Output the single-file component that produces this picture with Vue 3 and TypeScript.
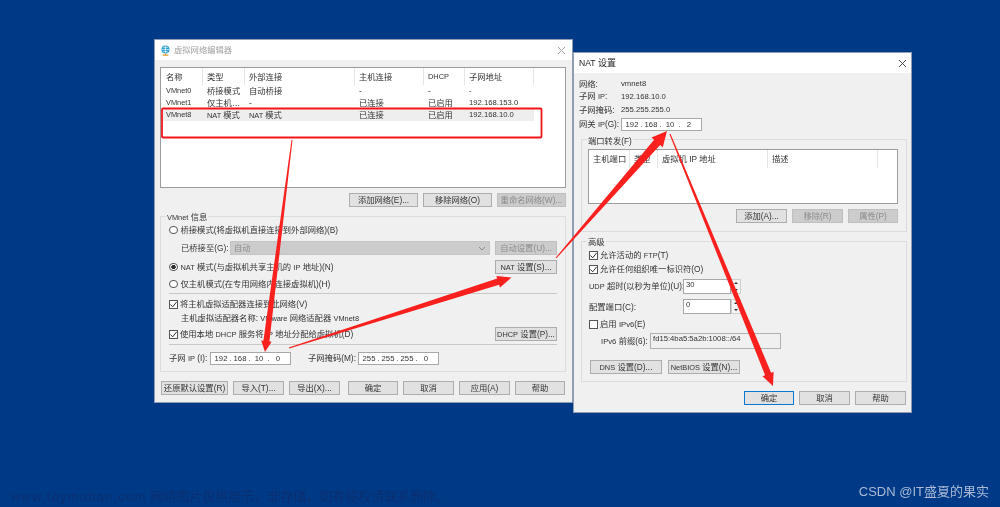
<script setup lang="ts">
interface Arrow { x1: number; y1: number; x2: number; y2: number; tail: number; neck: number; headW: number; headL: number }

const networks = [
  { name: 'VMnet0', type: '桥接模式', ext: '自动桥接', host: '-', dhcp: '-', subnet: '-', on: false, nat: false },
  { name: 'VMnet1', type: '仅主机…', ext: '-', host: '已连接', dhcp: '已启用', subnet: '192.168.153.0', on: false, nat: false },
  { name: 'VMnet8', type: '模式', ext: '模式', host: '已连接', dhcp: '已启用', subnet: '192.168.10.0', on: true, nat: true },
]
const leftHead = ['名称', '类型', '外部连接', '主机连接', 'DHCP', '子网地址']
const natHead = ['主机端口', '类型', '虚拟机 IP 地址', '描述']
const subnetIp = ['192', '168', '10', '0']
const maskIp = ['255', '255', '255', '0']
const gatewayIp = ['192', '168', '10', '2']

const arrows: Arrow[] = [
  { x1: 292, y1: 140, x2: 265, y2: 352, tail: 1, neck: 6, headW: 10.5, headL: 11 },
  { x1: 289, y1: 348, x2: 511.500, y2: 277.500, tail: 1, neck: 6.5, headW: 12, headL: 14 },
  { x1: 556, y1: 258, x2: 667, y2: 131, tail: 1, neck: 8, headW: 15, headL: 15 },
  { x1: 670, y1: 134, x2: 773, y2: 386, tail: 1, neck: 6.5, headW: 12, headL: 13 },
]

function points(a: Arrow): string {
  const dx = a.x2 - a.x1
  const dy = a.y2 - a.y1
  const len = Math.hypot(dx, dy)
  const ux = dx / len
  const uy = dy / len
  const nx = -uy
  const ny = ux
  const bx = a.x2 - ux * a.headL
  const by = a.y2 - uy * a.headL
  const at = (x: number, y: number, off: number) => `${(x + nx * off).toFixed(1)},${(y + ny * off).toFixed(1)}`
  return [
    at(a.x1, a.y1, a.tail / 2),
    at(bx, by, a.neck / 2),
    at(bx, by, a.headW / 2),
    at(a.x2, a.y2, 0),
    at(bx, by, -a.headW / 2),
    at(bx, by, -a.neck / 2),
    at(a.x1, a.y1, -a.tail / 2),
  ].join(' ')
}
</script>

<template>
  <div class="desktop">
    <section class="win win-left">
      <header class="title inactive">
        <svg class="globe" viewBox="0 0 12 12" width="11" height="11">
          <circle cx="6" cy="5" r="4.4" fill="#2a9fd0" />
          <path d="M2 5h8M6 .8v8.4M3.2 2.2c1.8 1 3.8 1 5.6 0M3.2 7.800c1.800-1 3.800-1 5.600 0" stroke="#fff" stroke-width=".7" fill="none" />
          <path d="M3 11h6M6 9.400V11" stroke="#e09a30" stroke-width="1.200" />
        </svg>
        <span>虚拟网络编辑器</span>
        <svg class="close" viewBox="0 0 9 9" width="9" height="9"><path d="M1 1l7 7M8 1L1 8" stroke="#9a9a9a" stroke-width=".9" /></svg>
      </header>
      <div class="body-left">
        <div class="list list-left">
          <div class="lrow lhead">
            <span v-for="h in leftHead" :key="h" class="hcell" :class="{ small: h === 'DHCP' }">{{ h }}</span>
          </div>
          <div v-for="n in networks" :key="n.name" class="lrow ldata" :class="{ sel: n.on }">
            <span class="small">{{ n.name }}</span>
            <span><span v-if="n.nat" class="small">NAT </span>{{ n.type }}</span>
            <span><span v-if="n.nat" class="small">NAT </span>{{ n.ext }}</span>
            <span>{{ n.host }}</span>
            <span>{{ n.dhcp }}</span>
            <span class="lat">{{ n.subnet }}</span>
          </div>
        </div>
        <div class="btns btns-list">
          <button class="w69">添加网络(E)...</button>
          <button class="w69">移除网络(O)</button>
          <button class="w69 off">重命名网络(W)...</button>
        </div>
        <div class="group group-vm">
          <span class="legend"><span class="small">VMnet</span> 信息</span>
          <div class="row">
            <i class="radio"></i><span>桥接模式(将虚拟机直接连接到外部网络)(B)</span>
          </div>
          <div class="row mt4 indent">
            <span class="bridge-label">已桥接至(G):</span>
            <div class="select"><span>自动</span>
              <svg viewBox="0 0 8 5" width="8" height="5"><path d="M1 1l3 3 3-3" stroke="#8c8c8c" fill="none" /></svg>
            </div>
            <button class="w62 off">自动设置(U)...</button>
          </div>
          <div class="row mt5 split">
            <div class="row"><i class="radio on"></i><span><span class="small">NAT</span> 模式(与虚拟机共享主机的 <span class="small">IP</span> 地址)(N)</span></div>
            <button class="w62"><span class="small">NAT</span> 设置(S)...</button>
          </div>
          <div class="row mt3">
            <i class="radio"></i><span>仅主机模式(在专用网络内连接虚拟机)(H)</span>
          </div>
          <div class="sep sep-a"></div>
          <div class="row">
            <i class="check">
              <svg viewBox="0 0 9 9" width="9" height="9"><path d="M1.500 4.500l2.200 2.300 4-5" stroke="#333" fill="none" /></svg>
            </i><span>将主机虚拟适配器连接到此网络(V)</span>
          </div>
          <div class="row indent"><span>主机虚拟适配器名称: <span class="small">VMware</span> 网络适配器 <span class="small">VMnet8</span></span></div>
          <div class="row mt2 split">
            <div class="row">
              <i class="check">
                <svg viewBox="0 0 9 9" width="9" height="9"><path d="M1.500 4.500l2.200 2.300 4-5" stroke="#333" fill="none" /></svg>
              </i><span>使用本地 <span class="small">DHCP</span> 服务将 <span class="small">IP</span> 地址分配给虚拟机(D)</span>
            </div>
            <button class="w62"><span class="small">DHCP</span> 设置(P)...</button>
          </div>
          <div class="sep sep-b"></div>
          <div class="row">
            <span class="subnet-label">子网 <span class="small">IP</span> (I):</span>
            <div class="ip">
              <template v-for="(o, i) in subnetIp" :key="i"><span class="octet">{{ o }}</span><span v-if="i < 3" class="dot">.</span></template>
            </div>
            <span class="mask-label">子网掩码(M):</span>
            <div class="ip">
              <template v-for="(o, i) in maskIp" :key="i"><span class="octet">{{ o }}</span><span v-if="i < 3" class="dot">.</span></template>
            </div>
          </div>
        </div>
        <div class="btns btns-foot">
          <button class="w67">还原默认设置(R)</button>
          <button class="w51">导入(T)...</button>
          <button class="w51">导出(X)...</button>
          <button class="w50 gap3">确定</button>
          <button class="w51">取消</button>
          <button class="w51">应用(A)</button>
          <button class="w50">帮助</button>
        </div>
      </div>
    </section>

    <section class="win win-right">
      <header class="title title-right">
        <span><span class="title-lat">NAT</span> 设置</span>
        <svg class="close" viewBox="0 0 9 9" width="9" height="9"><path d="M1 1l7 7M8 1L1 8" stroke="#333" stroke-width=".9" /></svg>
      </header>
      <div class="body-right">
        <dl class="info">
          <dt>网络:</dt><dd class="lat">vmnet8</dd>
          <dt>子网 <span class="small">IP</span>:</dt><dd class="lat">192.168.10.0</dd>
          <dt>子网掩码:</dt><dd class="lat">255.255.255.0</dd>
        </dl>
        <div class="row gateway">
          <span class="gw-label">网关 <span class="small">IP</span>(G):</span>
          <div class="ip">
            <template v-for="(o, i) in gatewayIp" :key="i"><span class="octet">{{ o }}</span><span v-if="i < 3" class="dot">.</span></template>
          </div>
        </div>
        <div class="group group-port">
          <span class="legend legend-port">端口转发(F)</span>
          <div class="list list-nat">
            <div class="nrow">
              <span v-for="h in natHead" :key="h" class="hcell">{{ h }}</span>
            </div>
          </div>
          <div class="btns btns-port">
            <button class="w51">添加(A)...</button>
            <button class="w51 off">移除(R)</button>
            <button class="w50 off">属性(P)</button>
          </div>
        </div>
        <div class="group group-adv">
          <span class="legend">高级</span>
          <div class="row">
            <i class="check">
              <svg viewBox="0 0 9 9" width="9" height="9"><path d="M1.500 4.500l2.200 2.300 4-5" stroke="#333" fill="none" /></svg>
            </i><span>允许活动的 <span class="small">FTP</span>(T)</span>
          </div>
          <div class="row">
            <i class="check">
              <svg viewBox="0 0 9 9" width="9" height="9"><path d="M1.500 4.500l2.200 2.300 4-5" stroke="#333" fill="none" /></svg>
            </i><span>允许任何组织唯一标识符(O)</span>
          </div>
          <div class="row spin-row mt-udp">
            <span class="spin-label"><span class="small">UDP</span> 超时(以秒为单位)(U):</span>
            <div class="spin-val">30</div>
            <div class="spin"><i class="up"></i><i class="down"></i></div>
          </div>
          <div class="row spin-row mt-cfg">
            <span class="spin-label">配置端口(C):</span>
            <div class="spin-val">0</div>
            <div class="spin"><i class="up"></i><i class="down"></i></div>
          </div>
          <div class="row mt-v6"><i class="check"></i><span>启用 <span class="lat">IPv6</span>(E)</span></div>
          <div class="row mt-prefix">
            <span class="prefix-label"><span class="lat">IPv6</span> 前缀(6):</span>
            <div class="prefix lat">fd15:4ba5:5a2b:1008::/64</div>
          </div>
          <div class="btns btns-dns">
            <button class="w72"><span class="small">DNS</span> 设置(D)...</button>
            <button class="w72"><span class="small">NetBIOS</span> 设置(N)...</button>
          </div>
        </div>
        <div class="btns btns-ok">
          <button class="w50 primary">确定</button>
          <button class="w51">取消</button>
          <button class="w51">帮助</button>
        </div>
      </div>
    </section>

    <svg class="overlay" viewBox="0 0 1000 507" width="1000" height="507">
      <rect x="162" y="108.500" width="379.500" height="29" rx="1" fill="none" stroke="#f5141c" stroke-width="1.800" />
      <polygon v-for="(a, i) in arrows" :key="i" :points="points(a)" fill="#f9201e" />
    </svg>

    <footer class="marks">
      <span class="mark-a"><span class="mark-url">www.toymoban.com</span> 网络图片仅供展示，非存储，如有侵权请联系删除。</span>
      <span class="mark-b">CSDN @IT盛夏的果实</span>
    </footer>
  </div>
</template>

<style>
html, body { margin: 0; background: #003a87; }
</style>

<style scoped>
.desktop {
  position: relative;
  width: 1000px;
  height: 507px;
  overflow: hidden;
  background: #003a87;
  filter: blur(0.42px);
  font-family: "Liberation Sans", "Noto Sans CJK SC", sans-serif;
  font-size: 8.3px;
  line-height: 12px;
  color: #333;
}
.lat { font-size: 7.7px; }
.small { font-size: 7.4px; }
.win {
  position: absolute;
  display: flex;
  flex-direction: column;
  box-sizing: border-box;
  background: #f0f0f0;
  border: 1px solid #8f9cb5;
}
.win-left { left: 154px; top: 39px; width: 419px; height: 364px; }
.win-right { left: 573px; top: 52px; width: 339px; height: 361px; }
.title {
  display: flex;
  align-items: center;
  height: 20px;
  flex: none;
  background: #fff;
  padding: 0 6px 0 5px;
  color: #222;
  font-size: 8.3px;
}
.title-right { font-size: 9px; padding-right: 4px; }
.title-lat { font-size: 8.6px; }
.title .close { margin-left: auto; }
.inactive { color: #a2a2a2; }
.globe { margin-right: 3px; }
.body-left { padding: 7px 6px 0 5px; display: flex; flex-direction: column; }
.body-right { padding: 4px 5px 0 5px; display: flex; flex-direction: column; }

.list { box-sizing: border-box; background: #fff; border: 1px solid #9c9c9c; }
.list-left { height: 121px; width: 406px; }
.lrow { display: grid; grid-template-columns: 42px 42px 110px 69px 41px 69px; align-items: center; }
.lhead { height: 17px; }
.ldata { height: 12px; }
.ldata > span { padding-left: 4px; white-space: nowrap; overflow: hidden; }
.ldata > span:first-child { padding-left: 5px; }
.sel { background: #eeeeee; width: 373px; }
.hcell {
  box-sizing: border-box;
  height: 100%;
  padding-left: 4px;
  display: flex;
  align-items: center;
  border-right: 1px solid #e5e5e5;
  white-space: pre;
}
.lhead .hcell:first-child { padding-left: 5px; }
.btns { display: flex; }
button {
  box-sizing: border-box;
  height: 14px;
  padding: 0;
  font: inherit;
  line-height: 12px;
  color: #333;
  background: #e1e1e1;
  border: 1px solid #adadad;
  white-space: nowrap;
  overflow: hidden;
}
button.off { background: #cccccc; border-color: #bfbfbf; color: #8b8b8b; }
button.primary { border-color: #0a78d0; }
.w50 { width: 50px; }
.w51 { width: 51px; }
.w62 { width: 62px; }
.w67 { width: 67px; }
.w69 { width: 69px; }
.w72 { width: 72px; }
.btns-list { justify-content: flex-end; gap: 5px; margin-top: 5px; width: 406px; }
.btns-foot { gap: 5px; margin-top: 9px; margin-left: 1px; }
.gap3 { margin-left: 3px; }

.group { position: relative; box-sizing: border-box; border: 1px solid #dcdcdc; }
.legend { position: absolute; left: 5px; top: -6px; background: #f0f0f0; padding: 0 1px; }
.legend-port { top: -5px; }
.group-vm { width: 406px; height: 156px; margin-top: 9px; padding: 6px 8px 0 8px; display: flex; flex-direction: column; }
.row { display: flex; align-items: center; height: 14px; flex: none; white-space: nowrap; }
.split { justify-content: space-between; }
.indent { padding-left: 12px; }
.mt2 { margin-top: 2px; }
.mt3 { margin-top: 3px; }
.mt4 { margin-top: 4px; }
.mt5 { margin-top: 5px; }
.radio {
  box-sizing: border-box;
  width: 8.500px;
  height: 8.500px;
  margin-right: 3px;
  border: 1px solid #555;
  border-radius: 50%;
  background: #fff;
  display: block;
  flex: none;
}
.radio.on { background: radial-gradient(circle, #333 0 2px, #fff 2.4px); }
.check {
  box-sizing: border-box;
  width: 9px;
  height: 9px;
  margin-right: 2px;
  border: 1px solid #555;
  background: #fff;
  display: flex;
  flex: none;
}
.check svg { margin: -1px; }
.bridge-label { width: 49px; }
.select {
  box-sizing: border-box;
  width: 260px;
  height: 14px;
  margin-right: 5px;
  padding: 0 3px;
  display: flex;
  align-items: center;
  justify-content: space-between;
  background: #cccccc;
  border: 1px solid #c4c4c4;
  color: #8b8b8b;
}
.sep { height: 1px; background: #c8c8c8; flex: none; }
.sep-a { margin: 2px 0 3px; }
.sep-b { margin: 3px 0 6px; }
.subnet-label { width: 41px; }
.mask-label { margin-left: 17px; width: 50px; }
.ip {
  box-sizing: border-box;
  display: flex;
  width: 81px;
  height: 13px;
  background: #fff;
  border: 1px solid #a8a8a8;
  padding-left: 2px;
  font-size: 7.7px;
  line-height: 11px;
}
.octet { width: 16px; text-align: center; }
.dot { width: 3px; text-align: center; }

.info { display: grid; grid-template-columns: 42px 1fr; grid-auto-rows: 13px; margin: 0; align-items: center; }
.info dd { margin: 0; }
.gateway { margin-top: 2px; height: 13px; }
.gw-label { width: 42px; }
.group-port { width: 326px; height: 93px; margin: 8px 0 0 2px; padding: 9px 8px 0 6px; }
.list-nat { height: 55px; width: 310px; }
.nrow { display: grid; grid-template-columns: 41px 28px 110px 110px; height: 18px; align-items: center; }
.btns-port { gap: 5px; margin-top: 5px; justify-content: flex-end; }
.group-adv { width: 326px; height: 141px; margin: 9px 0 0 2px; padding: 6px 6px 0 7px; display: flex; flex-direction: column; }
.mt-udp { margin-top: 3px; height: 15px; }
.mt-cfg { margin-top: 5px; height: 15px; }
.mt-v6 { margin-top: 3px; }
.mt-prefix { margin-top: 2px; height: 16px; }
.spin-label { width: 94px; }
.spin-val {
  box-sizing: border-box;
  width: 48px;
  height: 15px;
  background: #fff;
  border: 1px solid #a8a8a8;
  padding-left: 2px;
  font-size: 7.7px;
  line-height: 10px;
}
.spin { width: 10px; height: 15px; display: flex; flex-direction: column; justify-content: space-around; align-items: center; background: #f4f4f4; border: 1px solid #d0d0d0; box-sizing: border-box; }
.spin .up { width: 0; height: 0; border: 2px solid transparent; border-top: 0; border-bottom-color: #333; }
.spin .down { width: 0; height: 0; border: 2px solid transparent; border-bottom: 0; border-top-color: #333; }
.prefix-label { width: 49px; margin-left: 12px; }
.prefix {
  box-sizing: border-box;
  width: 131px;
  height: 16px;
  padding-left: 2px;
  background: #f0f0f0;
  border: 1px solid #b0b0b0;
  line-height: 10px;
}
.btns-dns { gap: 6px; margin-top: 11px; margin-left: 1px; }
.btns-ok { gap: 5px; margin-top: 9px; justify-content: flex-end; }

.overlay { position: absolute; left: 0; top: 0; pointer-events: none; }
.marks {
  position: absolute;
  left: 11px;
  right: 11px;
  bottom: 0;
  display: flex;
  justify-content: space-between;
  align-items: flex-end;
}
.mark-a { color: #0a2f70; font-size: 13px; line-height: 20px; }
.mark-url { letter-spacing: 1.2px; }
.mark-b { color: #a9bad6; font-size: 13px; line-height: 20px; margin-bottom: 5px; }
</style>
